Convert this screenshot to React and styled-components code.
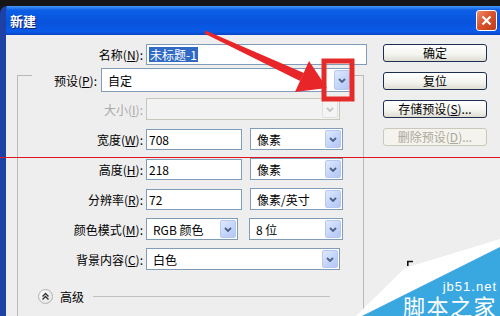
import React from 'react';
import styled, { createGlobalStyle } from 'styled-components';

const GlobalStyle = createGlobalStyle`
  html, body { margin: 0; padding: 0; }
  body {
    width: 500px;
    height: 316px;
    overflow: hidden;
    background: #161616;
    font-family: "Noto Sans CJK SC", "Liberation Sans", sans-serif;
    font-size: 12px;
    color: #000;
  }
`;

const Chevron = ({ color = '#4d6185' }) => (
  <svg width="8" height="5" viewBox="0 0 8 5">
    <path d="M1 1 L4 4 L7 1" stroke={color} strokeWidth="1.8" fill="none" />
  </svg>
);

const Select = ({ w, h = 22, value, disabled }) => (
  <SelectBox $w={w} $h={h} $disabled={disabled}>
    <SelectText>{value}</SelectText>
    <DropBtn $disabled={disabled}>
      <Chevron color={disabled ? '#c4c4c4' : '#4d6185'} />
    </DropBtn>
  </SelectBox>
);

const App = () => {
  return (
    <Page>
      <GlobalStyle />
      <Window>
        <TitleBar>
          <Title>新建</Title>
          <CloseButton>
            <svg width="11" height="11" viewBox="0 0 11 11">
              <path d="M1.5 1.5 L9.5 9.5 M9.5 1.5 L1.5 9.5" stroke="#fff" strokeWidth="2.2" />
            </svg>
          </CloseButton>
        </TitleBar>
        <Body>
          <LeftPane>
            <NameRow>
              <Label $w={126}>名称(<u>N</u>):</Label>
              <TextInput $w={221}>
                <Selected>未标题-1</Selected>
              </TextInput>
            </NameRow>
            <Group>
              <PresetRow>
                <Label $w={65}>预设(<u>P</u>):</Label>
                <Select w={251} h={24} value="自定" />
              </PresetRow>
              <FieldRow $mt={6}>
                <Label $w={125} $disabled>大小(<u>I</u>):</Label>
                <Select w={194} value="" disabled />
              </FieldRow>
              <FieldRow $mt={8}>
                <Label $w={125}>宽度(<u>W</u>):</Label>
                <TextInput $w={96}>708</TextInput>
                <Spacer $w={2} />
                <Select w={93} value="像素" />
              </FieldRow>
              <FieldRow $mt={8}>
                <Label $w={125}>高度(<u>H</u>):</Label>
                <TextInput $w={96}>218</TextInput>
                <Spacer $w={2} />
                <Select w={93} value="像素" />
              </FieldRow>
              <FieldRow $mt={8}>
                <Label $w={125}>分辨率(<u>R</u>):</Label>
                <TextInput $w={96}>72</TextInput>
                <Spacer $w={2} />
                <Select w={93} value="像素/英寸" />
              </FieldRow>
              <FieldRow $mt={8}>
                <Label $w={125}>颜色模式(<u>M</u>):</Label>
                <Select w={92} value="RGB 颜色" />
                <Spacer $w={5} />
                <Select w={94} value="8 位" />
              </FieldRow>
              <FieldRow $mt={8}>
                <Label $w={125}>背景内容(<u>C</u>):</Label>
                <Select w={194} value="白色" />
              </FieldRow>
              <AdvancedRow>
                <ExpandButton>
                  <svg width="9" height="9" viewBox="0 0 9 9">
                    <path d="M1.5 4.5 L4.5 1.5 L7.5 4.5 M1.5 7.5 L4.5 4.5 L7.5 7.5" stroke="#333" strokeWidth="1.4" fill="none" />
                  </svg>
                </ExpandButton>
                <span>高级</span>
                <Rule />
              </AdvancedRow>
            </Group>
          </LeftPane>
          <RightPane>
            <Button>确定</Button>
            <Button>复位</Button>
            <Button>存储预设(<u>S</u>)...</Button>
            <Button $disabled>删除预设(<u>D</u>)...</Button>
          </RightPane>
        </Body>
      </Window>

      {/* marks drawn over the screenshot */}
      <RedLine />
      <Annotations width="500" height="316" viewBox="0 0 500 316">
        <rect x="324" y="61" width="28" height="38" stroke="#e52a2a" strokeWidth="5" fill="none" />
        <polygon points="204.4,33.4 205.6,30.6 303.9,72.9 300.1,81.1" fill="#e8262a" />
        <polygon points="327,88 309,61 295,92" fill="#e8262a" />
        <path d="M407 261.5 h6 M407.8 261 v5" stroke="#111" strokeWidth="1.6" />
      </Annotations>

      <Watermark>
        <Curl />
        <Band />
        <Domain>jb51.net</Domain>
        <Brand>脚本之家</Brand>
      </Watermark>
    </Page>
  );
};

const Page = styled.div`
  position: relative;
  width: 500px;
  height: 316px;
  overflow: hidden;
  padding-top: 6px;
  box-sizing: border-box;
  background: #161616;
`;

const Window = styled.div`
  display: flex;
  flex-direction: column;
  height: 310px;
  border-left: 6px solid #1d41a4;
  border-top-left-radius: 7px;
  overflow: hidden;
`;

const TitleBar = styled.div`
  height: 29px;
  flex-shrink: 0;
  display: flex;
  align-items: center;
  justify-content: space-between;
  padding: 0 3px 0 4px;
  background: linear-gradient(#4896f7 0%, #0c5fe6 14%, #0953dd 55%, #0a5ae8 88%, #0844c6 100%);
`;

const Title = styled.span`
  color: #fff;
  font-weight: bold;
  font-size: 13px;
  text-shadow: 1px 1px #0a2270;
`;

const CloseButton = styled.div`
  width: 21px;
  height: 21px;
  box-sizing: border-box;
  border: 1px solid #fff;
  border-radius: 3px;
  display: flex;
  align-items: center;
  justify-content: center;
  background: linear-gradient(135deg, #ee8d6e 0%, #d9542f 45%, #c13a17 100%);
`;

const Body = styled.div`
  flex: 1;
  display: flex;
  background: #eeeeee;
`;

const LeftPane = styled.div`
  width: 364px;
  padding: 9px 0 0 11px;
  box-sizing: border-box;
`;

const RightPane = styled.div`
  width: 104px;
  margin-left: 13px;
  padding-top: 9px;
  display: flex;
  flex-direction: column;
  gap: 10px;
`;

const Label = styled.span`
  width: ${p => p.$w}px;
  flex-shrink: 0;
  text-align: right;
  white-space: nowrap;
  color: ${p => (p.$disabled ? '#a9a9a9' : '#000')};
  u { text-underline-offset: 1px; }
`;

const NameRow = styled.div`
  display: flex;
  align-items: center;
  gap: 3px;
`;

const TextInput = styled.div`
  width: ${p => p.$w}px;
  height: 21px;
  box-sizing: border-box;
  border: 1px solid #7f9db9;
  background: #fff;
  display: flex;
  align-items: center;
  padding-left: 2px;
  flex-shrink: 0;
`;

const Selected = styled.span`
  background: #316ac5;
  color: #fff;
  padding: 0 1px;
  line-height: 15px;
`;

const Group = styled.div`
  margin-top: 10px;
  width: 347px;
  min-height: 260px;
  box-sizing: border-box;
  border: 1px solid #b9b9b9;
  border-bottom: none;
`;

const PresetRow = styled.div`
  display: flex;
  align-items: center;
  gap: 4px;
  width: 320px;
  margin: -8px 0 0 14px;
  background: #eeeeee;
`;

const FieldRow = styled.div`
  display: flex;
  align-items: center;
  gap: 3px;
  margin-top: ${p => p.$mt}px;
`;

const Spacer = styled.span`
  width: ${p => p.$w}px;
  flex-shrink: 0;
`;

const SelectBox = styled.div`
  width: ${p => p.$w}px;
  height: ${p => p.$h}px;
  flex-shrink: 0;
  box-sizing: border-box;
  border: 1px solid ${p => (p.$disabled ? '#c9c7ba' : '#7f9db9')};
  background: ${p => (p.$disabled ? '#f2f2f2' : '#fff')};
  display: flex;
  align-items: stretch;
  padding: 1px;
`;

const SelectText = styled.span`
  flex: 1;
  display: flex;
  align-items: center;
  padding-left: 5px;
  white-space: nowrap;
`;

const DropBtn = styled.span`
  width: 16px;
  box-sizing: border-box;
  border: 1px solid ${p => (p.$disabled ? '#e0e0e0' : '#b7c8ee')};
  border-radius: 2px;
  background: ${p => (p.$disabled ? '#f4f4f4' : 'linear-gradient(135deg, #dfe9fd 0%, #c2d3fa 60%, #b3c7f5 100%)')};
  display: flex;
  align-items: center;
  justify-content: center;
`;

const AdvancedRow = styled.div`
  display: flex;
  align-items: center;
  gap: 7px;
  height: 16px;
  margin: 18px 33px 0 20px;
`;

const ExpandButton = styled.span`
  width: 15px;
  height: 15px;
  box-sizing: border-box;
  border-radius: 50%;
  border: 1px solid #b4b4b4;
  background: radial-gradient(circle at 35% 35%, #ffffff 0%, #e8e8e8 70%, #d4d4d4 100%);
  display: flex;
  align-items: center;
  justify-content: center;
`;

const Rule = styled.span`
  flex: 1;
  height: 1px;
  background: #c2c2c2;
  margin-left: 2px;
`;

const Button = styled.div`
  height: 18px;
  box-sizing: border-box;
  border: 1px solid ${p => (p.$disabled ? '#cac8bb' : '#1c2f52')};
  border-radius: 3px;
  background: ${p => (p.$disabled ? '#f4f3ee' : 'linear-gradient(#ffffff 0%, #f3f3ef 60%, #dedcd2 100%)')};
  color: ${p => (p.$disabled ? '#aca899' : '#000')};
  display: flex;
  align-items: center;
  justify-content: center;
  white-space: nowrap;
  line-height: 1;
`;

const RedLine = styled.div`
  position: absolute;
  left: 0;
  top: 157px;
  width: 500px;
  height: 1px;
  background: #e0141c;
`;

const Annotations = styled.svg`
  position: absolute;
  left: 0;
  top: 0;
  pointer-events: none;
`;

const Watermark = styled.div`
  position: absolute;
  right: 0;
  bottom: 0;
  width: 145px;
  height: 78px;
  padding-right: 3px;
  box-sizing: border-box;
  display: flex;
  flex-direction: column;
  align-items: flex-end;
  justify-content: flex-end;
  pointer-events: none;
`;

const Curl = styled.div`
  position: absolute;
  inset: 0;
  background: #ffffff;
  clip-path: polygon(1px 78px, 50px 30px, 145px 1px, 145px 9px, 7px 78px);
`;

const Band = styled.div`
  position: absolute;
  inset: 0;
  background: #3aa8e0;
  clip-path: polygon(7px 78px, 145px 9px, 145px 78px);
`;

const Domain = styled.span`
  position: relative;
  color: #fff;
  font-family: "Liberation Sans", sans-serif;
  font-size: 13px;
  line-height: 13px;
  letter-spacing: 1px;
  margin-bottom: 1px;
`;

const Brand = styled.span`
  position: relative;
  color: #fff;
  font-family: "Noto Sans CJK SC", sans-serif;
  font-size: 22px;
  line-height: 22px;
  letter-spacing: 1.5px;
`;

export default App;
